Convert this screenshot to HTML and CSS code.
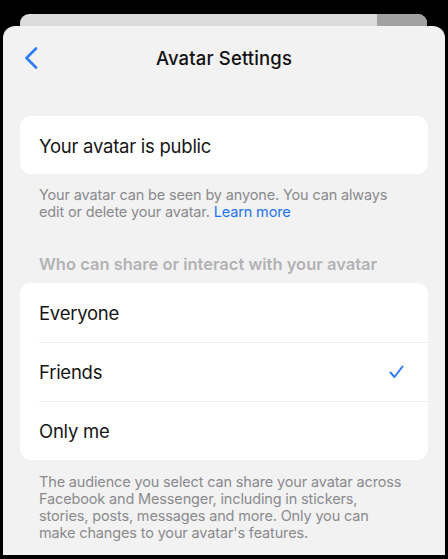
FILE: index.html
```html
<!DOCTYPE html>
<html lang="en">
<head>
<meta charset="utf-8">
<title>Avatar Settings</title>
<link rel="stylesheet" href="styles.css">
</head>
<body>
<div class="stack">
  <div class="behind"><div class="behind-tab"></div></div>
  <div class="sheet">
    <header class="nav">
      <button class="back" aria-label="Back">
        <svg width="14" height="22" viewBox="0 0 14 22"><path d="M12 1.5 L2.5 11 L12 20.5" fill="none" stroke="#2f7cf6" stroke-width="2.6" stroke-linecap="round" stroke-linejoin="round"/></svg>
      </button>
      <h1 class="title">Avatar Settings</h1>
    </header>

    <section class="card">
      <div class="row">Your avatar is public</div>
    </section>
    <p class="note">Your avatar can be seen by anyone. You can always edit or delete your avatar. <a class="link" href="#">Learn more</a></p>

    <h2 class="section-title">Who can share or interact with your avatar</h2>
    <section class="card">
      <div class="row">Everyone</div>
      <div class="row">Friends
        <svg class="check" width="15" height="14" viewBox="0 0 15 14"><path d="M1.5 7.5 L5.5 12 L13.5 1.5" fill="none" stroke="#2f7cf6" stroke-width="2" stroke-linecap="round" stroke-linejoin="round"/></svg>
      </div>
      <div class="row">Only me</div>
    </section>
    <p class="note note-foot">The audience you select can share your avatar across Facebook and Messenger, including in stickers, stories, posts, messages and more. Only you can make changes to your avatar's features.</p>
  </div>
</div>
</body>
</html>
```

FILE: styles.css
```css
* { box-sizing: border-box; }

html, body {
  margin: 0;
  background: #000;
  height: 559px;
  overflow: hidden;
}

body {
  font-family: Inter, "Noto Sans", sans-serif;
  color: #111;
}

.stack {
  padding-top: 14px;
}

.behind {
  margin: 0 21px 0 20px;
  height: 12px;
  background: #dcdcdc;
  border-radius: 9px 9px 0 0;
  display: flex;
  justify-content: flex-end;
  overflow: hidden;
}

.behind-tab {
  width: 50px;
  background: #a1a1a1;
}

.sheet {
  margin: 0 3px;
  height: 529px;
  background: #f2f2f2;
  border-radius: 12px 12px 0 0;
  padding: 0 17px;
}

.nav {
  height: 64px;
  display: flex;
  align-items: center;
  justify-content: center;
  position: relative;
}

.back {
  position: absolute;
  left: 4px;
  top: 21px;
  padding: 0;
  border: 0;
  background: none;
  line-height: 0;
}

.title {
  margin: 0;
  font-size: 18.5px;
  font-weight: 500;
  letter-spacing: 0.15px;
  color: #111;
}

.card {
  background: #fff;
  border-radius: 11px;
  overflow: hidden;
}

.nav + .card {
  margin-top: 26px;
}

.row {
  height: 59px;
  display: flex;
  align-items: center;
  justify-content: space-between;
  padding: 1px 22px 0 19px;
  font-size: 18.5px;
  letter-spacing: -0.25px;
  color: #161616;
  position: relative;
}

.card .row:first-child:last-child {
  height: 58px;
}

.row + .row::before {
  content: "";
  position: absolute;
  left: 19px;
  right: 0;
  top: 0;
  height: 1px;
  background: #efeff0;
}

.check {
  margin-right: 2px;
}

.note {
  margin: 0;
  padding: 12px 19px 0;
  font-size: 14.5px;
  line-height: 17px;
  letter-spacing: -0.15px;
  color: #8a8a8e;
}

.link {
  color: #1d74f0;
  text-decoration: none;
}

.section-title {
  margin: 0;
  padding: 34px 19px 0;
  height: 63px;
  font-size: 16.5px;
  line-height: 20px;
  font-weight: 600;
  color: #b2b2b5;
}

.note-foot {
  padding: 13px 22px 0 19px;
}
```
